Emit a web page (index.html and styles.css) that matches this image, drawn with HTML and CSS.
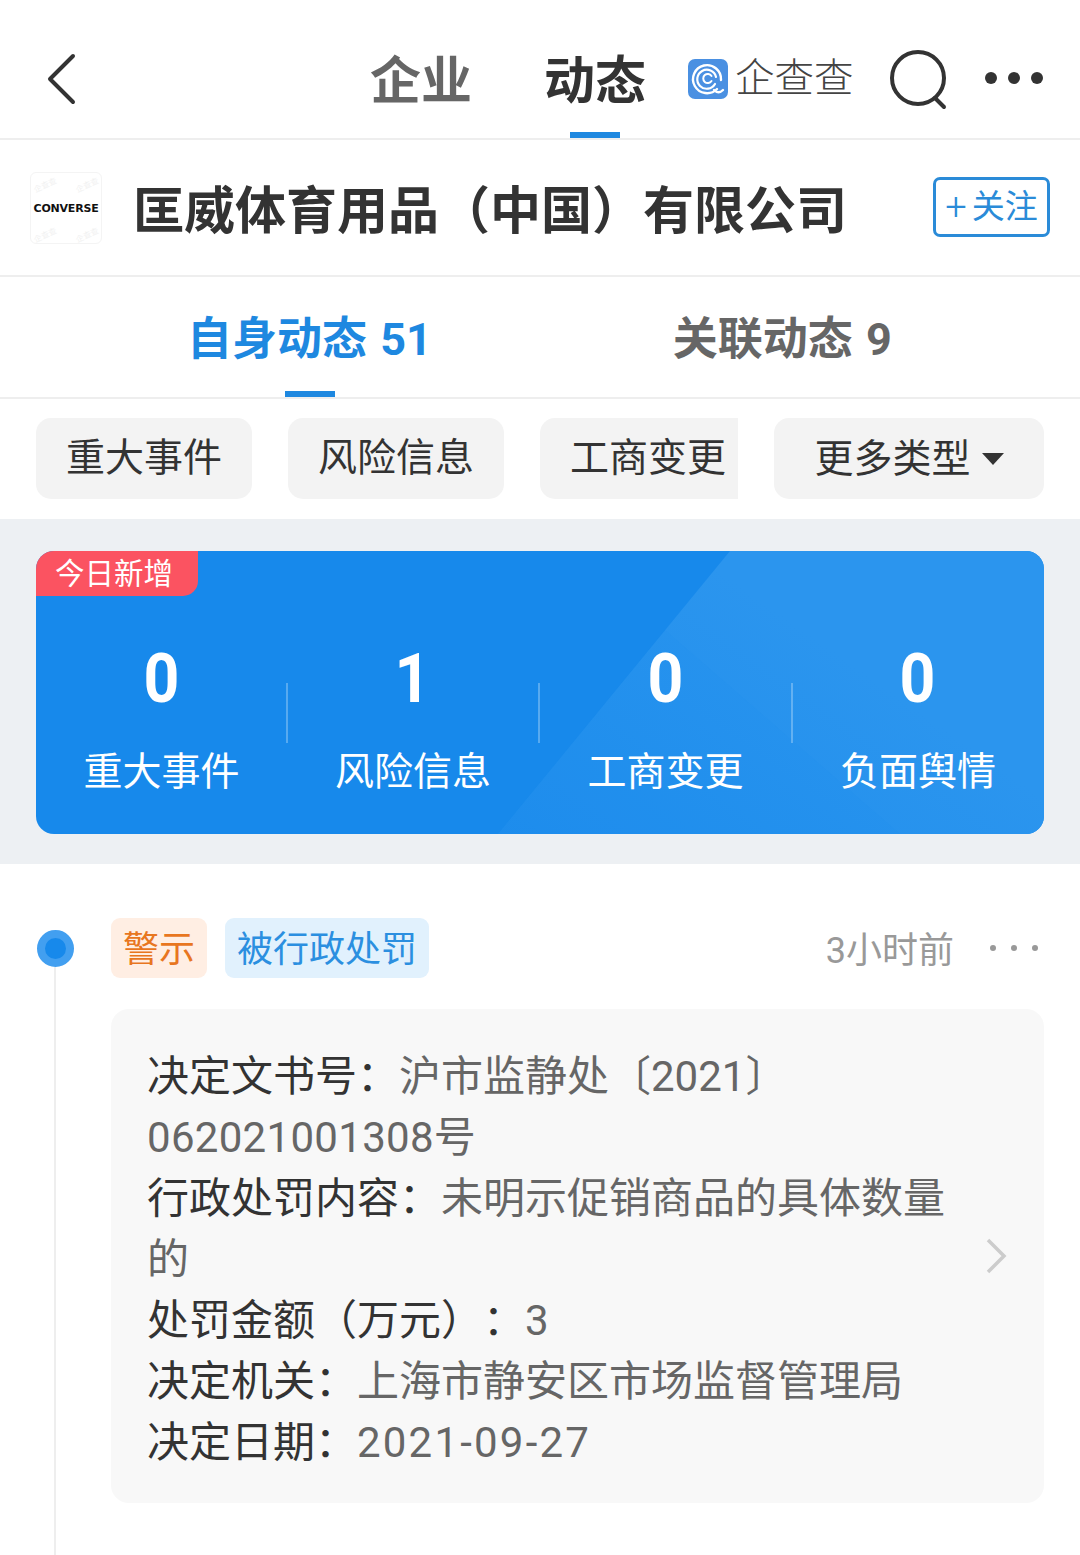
FILE: index.html
```html
<!DOCTYPE html>
<html lang="zh-CN">
<head>
<meta charset="utf-8">
<title>匡威体育用品（中国）有限公司</title>
<link rel="stylesheet" href="styles.css">
</head>
<body>
<header class="nav">
  <svg class="back" viewBox="0 0 30 52" width="30" height="52"><path d="M26 3 3 26l23 23" fill="none" stroke="#333" stroke-width="4" stroke-linecap="round" stroke-linejoin="round"/></svg>
  <nav class="nav-tabs">
    <span class="nav-tab">企业</span>
    <span class="nav-tab nav-tab-on">动态</span>
  </nav>
  <div class="brand">
    <svg class="brand-icon" viewBox="0 0 40 40" width="40" height="40">
      <rect width="40" height="40" rx="7" fill="#4a90e2"/>
      <g fill="none" stroke="#fff" stroke-linecap="round">
        <path d="M29 30a14 14 0 1 1 4-9" stroke-width="2.4"/>
        <path d="M27 25a9.500 9.500 0 1 1 1-7" stroke-width="2.2"/>
        <path d="M23.500 17a4.500 4.500 0 1 0 0 5" stroke-width="2"/>
        <path d="M26 31c3 3 6 3 9 0" stroke-width="2.4"/>
      </g>
    </svg>
    <span class="brand-name">企查查</span>
  </div>
  <svg class="search" viewBox="0 0 60 62" width="60" height="62"><circle cx="29" cy="29" r="26" fill="none" stroke="#333" stroke-width="4"/><path d="m46 49 9 9" stroke="#333" stroke-width="4" stroke-linecap="round"/></svg>
  <div class="more"><i></i><i></i><i></i></div>
</header>

<section class="company">
  <div class="logo">
    <span class="mark mark-a">企查查</span>
    <span class="mark mark-b">企查查</span>
    <span class="mark mark-c">企查查</span>
    <span class="mark mark-d">企查查</span>
    <span class="logo-text">CONVERSE</span>
  </div>
  <h1 class="company-name">匡威体育用品（中国）有限公司</h1>
  <button class="follow"><span class="follow-plus">+</span>关注</button>
</section>

<section class="tabs">
  <span class="tab tab-on">自身动态 51</span>
  <span class="tab">关联动态 9</span>
</section>

<section class="chips">
  <div class="chip-scroll">
    <span class="chip">重大事件</span>
    <span class="chip">风险信息</span>
    <span class="chip">工商变更</span>
  </div>
  <span class="chip chip-more">更多类型<i class="caret"></i></span>
</section>

<section class="summary">
  <div class="stats">
    <span class="today">今日新增</span>
    <div class="stat"><b>0</b><span>重大事件</span></div>
    <div class="stat"><b>1</b><span>风险信息</span></div>
    <div class="stat"><b>0</b><span>工商变更</span></div>
    <div class="stat"><b>0</b><span>负面舆情</span></div>
  </div>
</section>

<section class="feed">
  <div class="rail"><i class="dot"></i><i class="line"></i></div>
  <article class="entry">
    <div class="entry-head">
      <span class="tag tag-warn">警示</span>
      <span class="tag tag-info">被行政处罚</span>
      <span class="time">3小时前</span>
      <div class="entry-more"><i></i><i></i><i></i></div>
    </div>
    <div class="detail">
      <div class="detail-lines">
        <p><b>决定文书号：</b>沪市监静处〔2021〕<span class="num">062021001308</span>号</p>
        <p><b>行政处罚内容：</b>未明示促销商品的具体数量的</p>
        <p><b>处罚金额（万元）：</b>3</p>
        <p><b>决定机关：</b>上海市静安区市场监督管理局</p>
        <p><b>决定日期：</b><span class="date">2021-09-27</span></p>
      </div>
      <svg class="detail-arrow" viewBox="0 0 22 36" width="22" height="36"><path d="m3 2 16 16L3 34" fill="none" stroke="#ccc" stroke-width="3.500"/></svg>
    </div>
  </article>
</section>
</body>
</html>
```
FILE: styles.css
```css
* { box-sizing: border-box; margin: 0; padding: 0; }
html, body { width: 1080px; height: 1555px; overflow: hidden; background: #fff; }
body { font-family: Roboto, "Noto Sans CJK SC", sans-serif; color: #333; text-spacing-trim: space-all; }
i { display: block; font-style: normal; }

.nav { height: 140px; border-bottom: 2px solid #eee; display: flex; align-items: center; padding-left: 47px; }
.back { flex: none; margin-top: 20px; }
.nav-tabs { display: flex; gap: 72px; margin-left: 293px; height: 138px; }
.nav-tab { font-size: 51px; font-weight: 700; color: #666; line-height: 164px; height: 138px; width: 102px; white-space: nowrap; position: relative; }
.nav-tab-on { color: #333; }
.nav-tab-on::after { content: ""; position: absolute; left: 26px; bottom: 0; width: 50px; height: 6px; background: #1e88e0; }
.brand { display: flex; align-items: center; gap: 7px; margin: 20px 0 0 42px; }
.brand-icon { flex: none; }
.brand-name { font-size: 39.500px; line-height: 44px; color: #444; font-weight: 300; }
.search { flex: none; margin: 22px 0 0 35px; }
.more { display: flex; gap: 11px; margin: 18px 0 0 36px; }
.more i { width: 12px; height: 12px; border-radius: 50%; background: #333; }

.company { height: 137px; border-bottom: 2px solid #eee; display: flex; align-items: center; padding-left: 30px; }
.logo { width: 72px; height: 72px; flex: none; border-radius: 6px; border: 1px solid #f4f4f4; display: flex; align-items: center; justify-content: center; position: relative; overflow: hidden; }
.logo-text { font-family: "DejaVu Sans", sans-serif; font-weight: 700; font-size: 11px; letter-spacing: -.2px; color: #111; position: relative; top: 1px; }
.mark { position: absolute; font-size: 8px; color: #f1f1f1; transform: rotate(-25deg); }
.mark-a { left: 2px; top: 6px; }
.mark-b { right: 2px; top: 6px; }
.mark-c { left: 2px; bottom: 3px; }
.mark-d { right: 2px; bottom: 3px; }
.company-name { font-size: 51px; font-weight: 700; line-height: 70px; margin: 8px 0 0 31px; white-space: nowrap; color: #333; flex: none; width: 800px; }
.follow { width: 117px; height: 60px; flex: none; border: 3px solid #2a8bd8; border-radius: 7px; background: #fff; color: #2a8bd8; font: 400 33px/52px Roboto, "Noto Sans CJK SC", sans-serif; display: flex; align-items: center; justify-content: center; margin-top: -2px; }
.follow-plus { font-size: 38px; margin-right: 5px; font-weight: 300; }

.tabs { height: 122px; border-bottom: 2px solid #eee; display: flex; padding-left: 187px; gap: 241px; }
.tab { font-size: 45px; font-weight: 700; color: #666; line-height: 126px; height: 120px; position: relative; white-space: nowrap; word-spacing: 2px; }
.tab-on { color: #1e88e0; }
.tab-on::after { content: ""; position: absolute; left: 98px; bottom: 0; width: 50px; height: 6px; background: #1e88e0; }

.chips { height: 120px; padding: 19px 36px 20px; display: flex; justify-content: space-between; }
.chip-scroll { width: 702px; display: flex; gap: 36px; overflow: hidden; }
.chip { flex: none; width: 216px; height: 81px; background: #f3f3f3; border-radius: 15px; font-size: 39px; line-height: 80px; text-align: center; color: #333; }
.chip-more { width: 270px; display: flex; align-items: center; justify-content: center; gap: 11px; }
.caret { width: 0; height: 0; border-style: solid; border-width: 12px 11px 0; border-color: #333 transparent transparent; }

.summary { height: 345px; background: #edf0f3; padding: 32px 36px 30px; }
.stats { height: 283px; border-radius: 18px; background: #1789eb; position: relative; overflow: hidden; display: grid; grid-template-columns: 251px 252px 253px 252px; padding-top: 94px; }
.stats::before { content: ""; position: absolute; inset: 0; background: linear-gradient(35deg, #1a8bec 20%, #2b95ee 75%); clip-path: polygon(694px 0, 462px 283px, 1008px 283px, 1008px 0); }
.stats::after { content: ""; position: absolute; inset: 0; background: rgba(23,137,235,.12); clip-path: polygon(629px 79px, 864px 283px, 462px 283px); }
.today { position: absolute; z-index: 1; left: 0; top: 0; width: 162px; height: 45px; background: #fb5361; border-bottom-right-radius: 15px; color: #fff; font-size: 29.500px; line-height: 46px; padding-left: 19px; }
.stat { display: flex; flex-direction: column; align-items: center; color: #fff; position: relative; z-index: 1; }
.stat b { font-size: 68px; line-height: 68px; font-weight: 700; transform: scaleX(.92); }
.stat span { font-size: 39px; line-height: 56px; margin-top: 31px; }
.stat + .stat::before { content: ""; position: absolute; left: -1px; top: 38px; width: 2px; height: 60px; background: rgba(255,255,255,.28); }

.feed { display: flex; height: 691px; padding: 54px 36px 0; }
.rail { width: 38px; flex: none; display: flex; flex-direction: column; align-items: center; padding-top: 12px; }
.dot { width: 37px; height: 37px; flex: none; border-radius: 50%; background: #1789eb; border: 8px solid #429ff0; }
.line { width: 2px; flex: 1; background: #eee; }
.entry { width: 933px; margin-left: 37px; flex: none; }
.entry-head { height: 60px; display: flex; align-items: center; gap: 18px; }
.tag { height: 60px; border-radius: 9px; font-size: 36px; line-height: 64px; padding: 0 12px; }
.tag-warn { background: #ffeee3; color: #e8761f; }
.tag-info { background: #e1f1fd; color: #2b8fe0; }
.time { margin-left: auto; font-size: 36px; color: #999; line-height: 66px; height: 60px; margin-right: 18px; }
.entry-more { display: flex; gap: 15px; padding-right: 6px; }
.entry-more i { width: 6px; height: 6px; border-radius: 50%; background: #999; }
.detail { margin-top: 31px; height: 494px; background: #f8f8f8; border-radius: 18px; padding: 37px 36px 0; position: relative; }
.detail-lines { width: 815px; font-size: 42px; line-height: 61px; color: #666; }
.detail-lines b { font-weight: 400; color: #333; }
.num { letter-spacing: .3px; }
.date { letter-spacing: 2.200px; }
.detail-arrow { position: absolute; right: 37px; top: 229px; }
```
